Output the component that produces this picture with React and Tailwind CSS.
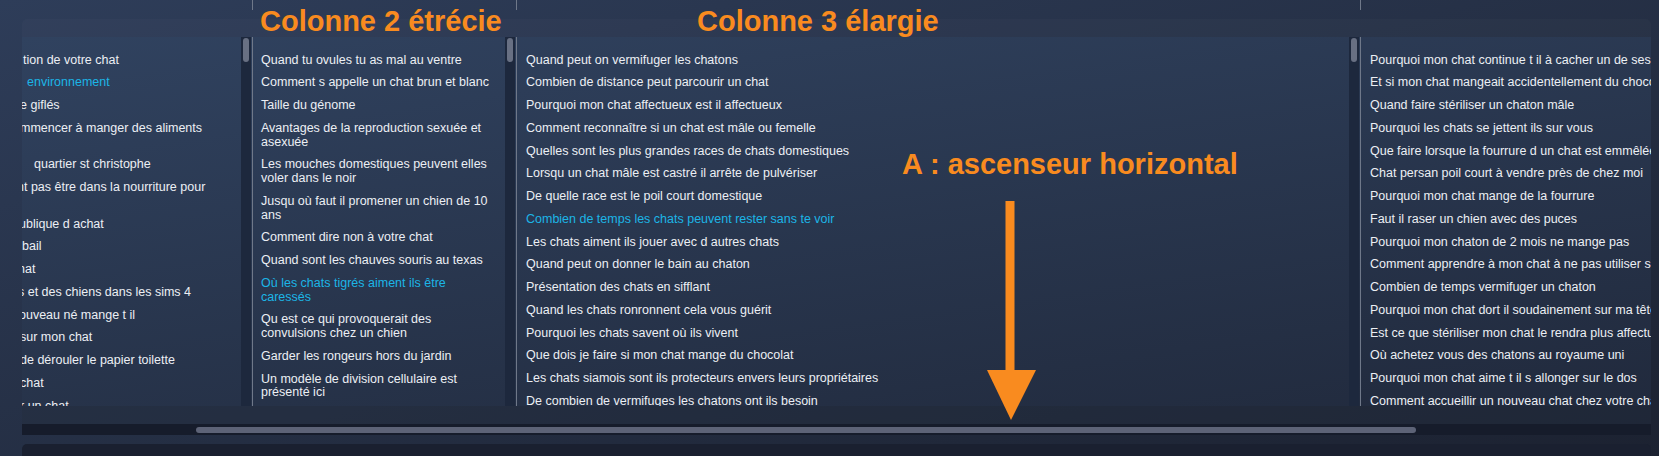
import React from "react";

const col1 = [
  { t: "tion de votre chat", cls: "ml-[1px]" },
  { t: "environnement", cls: "ml-[5px]", c: true },
  { t: "e giflés", cls: "-ml-[2px]" },
  { t: "mmencer à manger des aliments", cls: "-ml-[2px]", two: true },
  { t: "quartier st christophe", cls: "ml-[12px]" },
  { t: "nt pas être dans la nourriture pour", cls: "-ml-[5px]", two: true },
  { t: "ublique d achat", cls: "-ml-[3px]" },
  { t: "bail", cls: "ml-0" },
  { t: "hat", cls: "-ml-[4px]" },
  { t: "s et des chiens dans les sims 4", cls: "-ml-[4px]" },
  { t: "ouveau né mange t il", cls: "-ml-[3px]" },
  { t: "sur mon chat", cls: "-ml-[2px]" },
  { t: "de dérouler le papier toilette", cls: "-ml-[2px]" },
  { t: "chat", cls: "-ml-[2px]" },
  { t: "r un chat", cls: "-ml-[2px]" },
];

const col2 = [
  { t: "Quand tu ovules tu as mal au ventre" },
  { t: "Comment s appelle un chat brun et blanc" },
  { t: "Taille du génome" },
  { t: "Avantages de la reproduction sexuée et asexuée" },
  { t: "Les mouches domestiques peuvent elles voler dans le noir" },
  { t: "Jusqu où faut il promener un chien de 10 ans" },
  { t: "Comment dire non à votre chat" },
  { t: "Quand sont les chauves souris au texas" },
  { t: "Où les chats tigrés aiment ils être caressés", c: true },
  { t: "Qu est ce qui provoquerait des convulsions chez un chien" },
  { t: "Garder les rongeurs hors du jardin" },
  { t: "Un modèle de division cellulaire est présenté ici" },
];

const col3 = [
  { t: "Quand peut on vermifuger les chatons" },
  { t: "Combien de distance peut parcourir un chat" },
  { t: "Pourquoi mon chat affectueux est il affectueux" },
  { t: "Comment reconnaître si un chat est mâle ou femelle" },
  { t: "Quelles sont les plus grandes races de chats domestiques" },
  { t: "Lorsqu un chat mâle est castré il arrête de pulvériser" },
  { t: "De quelle race est le poil court domestique" },
  { t: "Combien de temps les chats peuvent rester sans te voir", c: true },
  { t: "Les chats aiment ils jouer avec d autres chats" },
  { t: "Quand peut on donner le bain au chaton" },
  { t: "Présentation des chats en sifflant" },
  { t: "Quand les chats ronronnent cela vous guérit" },
  { t: "Pourquoi les chats savent où ils vivent" },
  { t: "Que dois je faire si mon chat mange du chocolat" },
  { t: "Les chats siamois sont ils protecteurs envers leurs propriétaires" },
  { t: "De combien de vermifuges les chatons ont ils besoin" },
];

const col4 = [
  { t: "Pourquoi mon chat continue t il à cacher un de ses jouets" },
  { t: "Et si mon chat mangeait accidentellement du chocolat" },
  { t: "Quand faire stériliser un chaton mâle" },
  { t: "Pourquoi les chats se jettent ils sur vous" },
  { t: "Que faire lorsque la fourrure d un chat est emmêlée" },
  { t: "Chat persan poil court à vendre près de chez moi" },
  { t: "Pourquoi mon chat mange de la fourrure" },
  { t: "Faut il raser un chien avec des puces" },
  { t: "Pourquoi mon chaton de 2 mois ne mange pas" },
  { t: "Comment apprendre à mon chat à ne pas utiliser ses griffes" },
  { t: "Combien de temps vermifuger un chaton" },
  { t: "Pourquoi mon chat dort il soudainement sur ma tête" },
  { t: "Est ce que stériliser mon chat le rendra plus affectueux" },
  { t: "Où achetez vous des chatons au royaume uni" },
  { t: "Pourquoi mon chat aime t il s allonger sur le dos" },
  { t: "Comment accueillir un nouveau chat chez votre chat" },
];

function Row({ item, nowrap, clipCls }) {
  const color = item.c ? "text-[#1cb5e6]" : "text-[#eceff4]";
  return (
    <div className={`py-[4.5px] leading-[13.75px] ${color} ${nowrap ? "whitespace-nowrap" : ""}`}>
      {clipCls ? (
        <>
          <div className={item.cls}>{item.t}</div>
          {item.two ? <div>&nbsp;</div> : null}
        </>
      ) : (
        item.t
      )}
    </div>
  );
}

function Track() {
  return (
    <div className="w-[10px] shrink-0 bg-[#1d283d] pt-[1px] pl-[2px]">
      <div className="w-[6px] h-[24px] rounded-full bg-[#687083]" />
    </div>
  );
}

export default function App() {
  return (
    <div
      className="relative w-[1659px] h-[456px] overflow-hidden bg-[linear-gradient(to_bottom_right,#2e3d59,#1c2231)]"
      style={{ fontFamily: '"Liberation Sans", Arial, sans-serif' }}
    >
      {/* top header stubs */}
      <div className="flex h-[19px]">
        <div className="w-[252px] shrink-0" />
        <div className="w-px h-[10px] bg-[#6f7889]" />
        <div className="w-[263px] shrink-0" />
        <div className="w-px h-[10px] bg-[#6f7889]" />
        <div className="w-[843px] shrink-0" />
        <div className="w-px h-[10px] bg-[#6f7889]" />
      </div>

      {/* panel */}
      <div className="ml-[22px] w-[1629px] h-[416px] rounded-t-[5px] bg-white/[0.02] flex flex-col">
        <div className="h-[18px] shrink-0" />
        <div className="h-[369px] shrink-0 flex overflow-hidden bg-[linear-gradient(172deg,#30425f,#212a3d)] text-[12.5px]">
          {/* col 1 */}
          <div className="w-[230px] shrink-0 flex">
            <div className="w-[219px] shrink-0 overflow-hidden pt-[12px]">
              {col1.map((it, i) => (
                <Row key={i} item={it} nowrap clipCls />
              ))}
            </div>
            <Track />
            <div className="w-px" />
          </div>
          {/* col 2 */}
          <div className="w-[264px] shrink-0 flex border-l border-[#6f7889]">
            <div className="w-[252px] shrink-0 overflow-hidden pt-[12px] pl-[8px] pr-[8px]">
              {col2.map((it, i) => (
                <Row key={i} item={it} />
              ))}
            </div>
            <Track />
            <div className="w-px" />
          </div>
          {/* col 3 */}
          <div className="w-[844px] shrink-0 flex border-l border-[#6f7889]">
            <div className="w-[832px] shrink-0 overflow-hidden pt-[12px] pl-[9px]">
              {col3.map((it, i) => (
                <Row key={i} item={it} nowrap />
              ))}
            </div>
            <Track />
            <div className="w-px" />
          </div>
          {/* col 4 */}
          <div className="flex-1 min-w-0 border-l border-[#6f7889] overflow-hidden pt-[12px] pl-[9px]">
            {col4.map((it, i) => (
              <Row key={i} item={it} nowrap />
            ))}
          </div>
        </div>
        <div className="h-[18px] shrink-0 bg-[#1f2739]/40" />
        <div className="h-[11px] shrink-0 bg-[#161c2b] pt-[3px] pl-[174px]">
          <div className="w-[1220px] h-[6px] rounded-full bg-[#5d6377]" />
        </div>
      </div>

      <div className="mt-[9px] ml-[22px] w-[1629px] h-[12px] rounded-t-[5px] bg-[#1a2030]" />

      {/* annotations */}
      <div className="absolute left-[260px] top-[7px] text-[29px] leading-[29px] font-bold text-[#f98b1f] whitespace-nowrap">
        Colonne 2 étrécie
      </div>
      <div className="absolute left-[697px] top-[7px] text-[29px] leading-[29px] font-bold text-[#f98b1f] whitespace-nowrap">
        Colonne 3 élargie
      </div>
      <div className="absolute left-[902px] top-[150px] text-[29px] leading-[29px] font-bold text-[#f98b1f] whitespace-nowrap">
        A : ascenseur horizontal
      </div>
      <svg className="absolute left-[985px] top-[199px]" width="54" height="224" viewBox="0 0 54 224">
        <rect x="20.5" y="2" width="9" height="171" fill="#f98b1f" />
        <polygon points="2,171 51,171 26,221" fill="#f98b1f" />
      </svg>
    </div>
  );
}
